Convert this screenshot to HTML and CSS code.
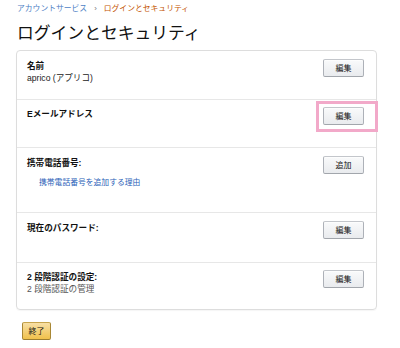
FILE: index.html
```html
<!DOCTYPE html>
<html lang="ja">
<head>
<meta charset="utf-8">
<title>ログインとセキュリティ</title>
<link rel="stylesheet" href="styles.css">
</head>
<body>
<div class="page">
  <nav class="crumbs">
    <a class="crumb-link" href="#">アカウントサービス</a>
    <span class="crumb-sep">›</span>
    <span class="crumb-current">ログインとセキュリティ</span>
  </nav>
  <h1 class="title">ログインとセキュリティ</h1>
  <div class="card">
    <div class="row row-1">
      <div class="info">
        <div class="label">名前</div>
        <div class="value">aprico (アプリコ)</div>
      </div>
      <button class="btn">編集</button>
    </div>
    <div class="row row-2">
      <div class="info">
        <div class="label">Eメールアドレス</div>
      </div>
      <button class="btn">編集</button>
      <span class="highlight"></span>
    </div>
    <div class="row row-3">
      <div class="info">
        <div class="label">携帯電話番号:</div>
        <div class="reason"><a class="reason-link" href="#">携帯電話番号を追加する理由</a></div>
      </div>
      <button class="btn">追加</button>
    </div>
    <div class="row row-4">
      <div class="info">
        <div class="label">現在のパスワード:</div>
      </div>
      <button class="btn">編集</button>
    </div>
    <div class="row row-5">
      <div class="info">
        <div class="label">2 段階認証の設定:</div>
        <div class="value muted">2 段階認証の管理</div>
      </div>
      <button class="btn">編集</button>
    </div>
  </div>
  <button class="btn-done">終了</button>
</div>
</body>
</html>
```
FILE: styles.css
```css
* { box-sizing: border-box; }
html, body { margin: 0; padding: 0; background: #fff; }
body {
  font-family: "Liberation Sans", "Noto Sans CJK JP", sans-serif;
  color: #111;
}
.page {
  width: 400px;
  padding: 3px 23px 0 16px;
}
.crumbs {
  font-size: 7.8px;
  line-height: 12px;
  padding-left: 1px;
  display: flex;
  gap: 7px;
}
.crumb-link { color: #4d7ec4; text-decoration: none; }
.crumb-sep { color: #777; }
.crumb-current { color: #c45500; }
.title {
  margin: 6px 0 0 1px;
  font-weight: normal;
  font-size: 16.8px;
  line-height: 22px;
  height: 29px;
  font-family: "Noto Sans CJK JP", sans-serif;
}
.card {
  border: 1px solid #ddd;
  border-radius: 4px;
  width: 361px;
  box-shadow: 0 1px 1px rgba(0,0,0,0.04);
}
.row {
  position: relative;
  display: flex;
  justify-content: space-between;
  align-items: flex-start;
  padding: 8px 12px 0 10px;
  border-bottom: 1px solid #e7e7e7;
}
.row-1 { height: 49px; }
.row-2 { height: 48px; padding-top: 7px; }
.row-3 { height: 65px; }
.row-4 { height: 50px; }
.row-5 { height: 46px; padding-top: 7px; border-bottom: none; }
.info { padding-top: 1px; }
.label {
  font-size: 8.6px;
  line-height: 12px;
  font-weight: bold;
}
.value {
  font-size: 8.6px;
  line-height: 12px;
  color: #222;
}
.muted { color: #555; }
.reason {
  padding: 8px 0 0 12px;
  font-size: 7.8px;
  line-height: 12px;
}
.reason-link {
  color: #2b5fb8;
  text-decoration: none;
}
.btn {
  width: 41px;
  height: 18px;
  padding: 0;
  border: 1px solid #adb1b8;
  border-color: #c3c6cb #adb1b8 #a2a6ac;
  border-radius: 2px;
  background: linear-gradient(#f9fafb, #e9ebee);
  box-shadow: inset 0 1px 0 rgba(255,255,255,0.6);
  font-family: "Noto Sans CJK JP", sans-serif;
  font-size: 8px;
  line-height: 16px;
  color: #111;
}
.highlight {
  position: absolute;
  left: 299px;
  top: 1px;
  width: 62px;
  height: 31px;
  border: 3px solid #f2a9c9;
}
.btn-done {
  margin: 12px 0 0 6px;
  width: 29px;
  height: 18px;
  padding: 0;
  border: 1px solid #a88734;
  border-color: #c6a44d #a88734 #9c7e31;
  border-radius: 2px;
  background: linear-gradient(#f7dfa5, #f0c14b);
  font-family: "Noto Sans CJK JP", sans-serif;
  font-size: 8px;
  line-height: 16px;
  color: #111;
}
```
